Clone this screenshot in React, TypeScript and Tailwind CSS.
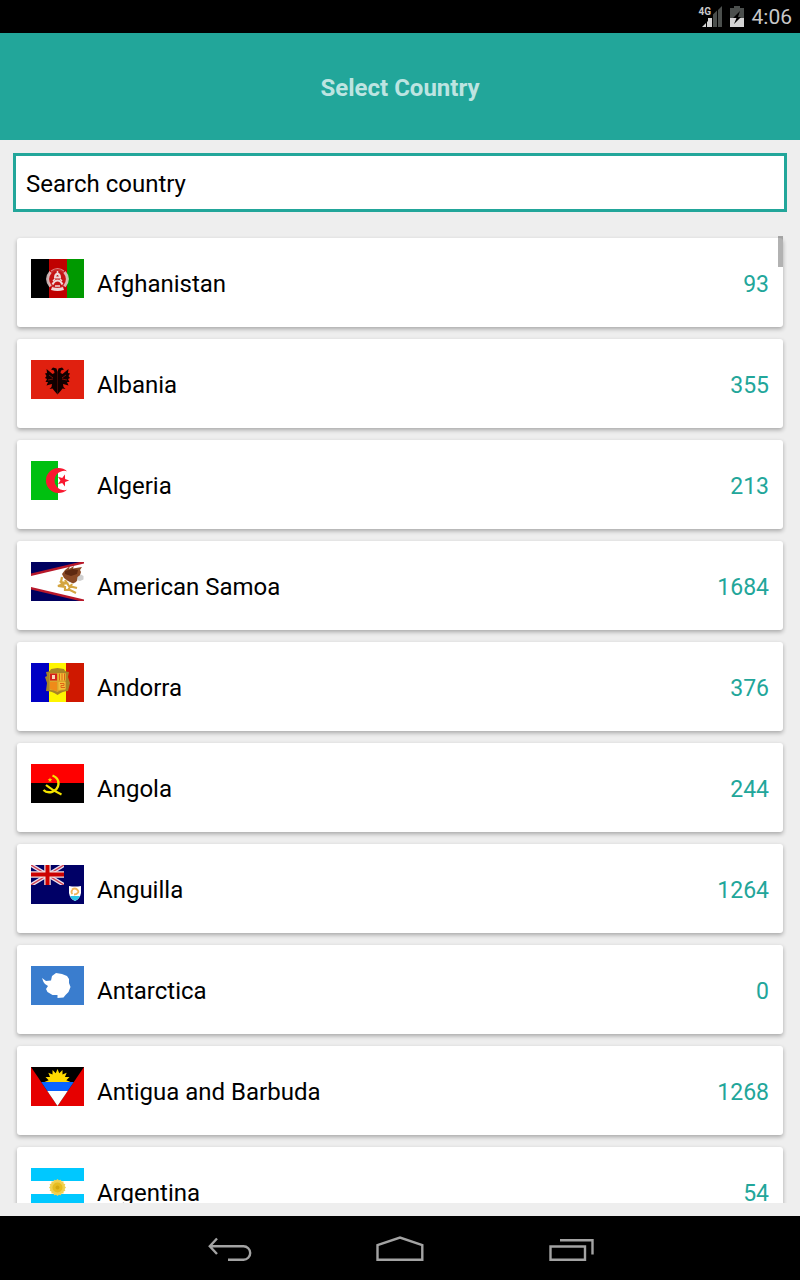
import type { ReactNode } from "react";

const starPoints = (cx: number, cy: number, outer: number, inner: number, tips: number, turn: number) =>
  Array.from({ length: tips * 2 }, (_, i) => {
    const r = i % 2 === 0 ? outer : inner;
    const a = turn + (i * Math.PI) / tips;
    return `${(cx + r * Math.cos(a)).toFixed(2)},${(cy + r * Math.sin(a)).toFixed(2)}`;
  }).join(" ");

const eagleWing =
  "M26.500 12L25.500 8.500L22 7.500L20 9.500L23 10.500L23.500 13L21.500 14L15.500 9L16 13L14 13.500L15.500 16L14 18L16 19L14.500 22L17 22L15.500 25.500L19 24.500L21 24L20.500 27L18.500 29L21.500 28.500L23 30.500L26.500 34.500z";

const flags: Record<string, ReactNode> = {
  Afghanistan: (
    <>
      <path fill="#000" d="M0 0h18v39H0z" />
      <path fill="#bf0000" d="M18 0h18v39H18z" />
      <path fill="#009900" d="M36 0h17v39H36z" />
      <circle cx="26.500" cy="20" r="10" fill="#d05050" opacity=".55" />
      <circle cx="26.500" cy="20" r="8" fill="#c41414" />
      <g fill="none" stroke="#eedada">
        <path strokeWidth="2.800" d="M19.500 13q-6 7 0 14.500M33.500 13q6 7 0 14.500" opacity=".8" />
        <path strokeWidth="1.200" d="M20 12q6.500-5 13 0" opacity=".6" />
        <path strokeWidth="2" d="M24 18.500q0-3 2.500-4q2.500 1 2.500 4zM21.500 25.500q2-4 5-4t5 4" />
        <path strokeWidth="1.500" d="M22 22l2-2M31 22l-2-2M26.500 14v-2M24 27h5" />
        <path strokeWidth="3" d="M20.500 29.500q6 2 12 0" />
      </g>
    </>
  ),
  Albania: (
    <>
      <path fill="#e0200f" d="M0 0h53v39H0z" />
      <path fill="#110000" d={eagleWing} />
      <path fill="#110000" d={eagleWing} transform="matrix(-1 0 0 1 53 0)" />
      <path stroke="#e0200f" strokeWidth=".500" d="M18 15l4 3M17 20l5-1M35 15l-4 3M36 20l-5-1" />
    </>
  ),
  Algeria: (
    <>
      <path fill="#fff" d="M0 0h53v39H0z" />
      <path fill="#00c010" d="M0 0h27v39H0z" />
      <path fill="#f9182f" d="M36 10.200a12.600 12.600 0 1 0 0 18.600a9.700 9.700 0 1 1 0-18.600z" />
      <polygon fill="#f9182f" points={starPoints(32, 19.5, 6.2, 2.6, 5, 0)} />
    </>
  ),
  "American Samoa": (
    <>
      <path fill="#00005f" d="M0 0h53v39H0z" />
      <path fill="#b8182a" d="M53 -1L0 11.500v16L53 40z" />
      <path fill="#fff" d="M53 1.500L0 14v11L53 37.500z" />
      <path
        fill="#8a4a26"
        d="M31 12L34 8L39 4L38 7L43 4L42 6.500L51 5L49 8L50 10L48.500 15L45 20L42 21.500L37 19L33 16z"
      />
      <path fill="#5e2911" d="M34 9L42 7L47 8L46 12L40 14L34 12z" />
      <path fill="#cfcfcf" d="M46.500 15L50 12.500L52.500 14V17.500L49 19L46 18z" />
      <path
        fill="none"
        stroke="#d4a540"
        strokeWidth="2.200"
        d="M31 15L30 20L35 21L27 24L34 25L34 28L39 28L45 31M34 18L38 24L46 26M37 28L41 22M29 19L33 24"
      />
    </>
  ),
  Andorra: (
    <>
      <path fill="#0000c4" d="M0 0h18v39H0z" />
      <path fill="#fff500" d="M18 0h17v39H18z" />
      <path fill="#cf1800" d="M35 0h18v39H35z" />
      <path fill="#a88525" d="M15 9q4 0 5-3l6.500-1 6.500 1q1 3 5 3l-1 5 2 6-2 8q-5 0-10.500 4q-5.500-4-11.500-4l1-8-2-6 2-1z" />
      <path fill="#dba62c" d="M18.500 10h16v17q-6 0-8 2q-3-2-8-2z" />
      <path fill="#d3201c" d="M19 10.500h7v7h-7z" />
      <path fill="#f8d7b4" d="M21 12h3v4h-3z" />
      <path fill="#ef8b19" d="M19 19h7v9l-7-2z" />
      <path fill="#f4bf38" d="M27.500 10.500h7v7h-7zM27.500 19h7v7l-7 1z" />
      <path fill="none" stroke="#e06518" d="M28.500 10.500v7M31 10.500v7M33.500 10.500v7M29 20.500h4v2h-3v2h4" />
    </>
  ),
  Angola: (
    <>
      <path fill="#000" d="M0 0h53v39H0z" />
      <path fill="#f00" d="M0 0h53v19H0z" />
      <path fill="none" stroke="#f4e400" strokeWidth="2.400" d="M21.500 11.500q6.500 2.500 6 8.500t-7 8q-5 1-8-2" />
      <path fill="none" stroke="#f4e400" strokeWidth="2.200" d="M15 21q6 5 15.500 9.500" />
      <polygon fill="#ffd000" points={starPoints(19, 16, 2.4, 1.1, 5, -1.57)} />
    </>
  ),
  Anguilla: (
    <>
      <path fill="#000066" d="M0 0h53v39H0z" />
      <svg width="33" height="20" viewBox="0 0 33 20">
        <path stroke="#e8e0ee" strokeWidth="4" d="M0 0l33 20M33 0L0 20" />
        <path stroke="#d04050" strokeWidth="1.400" d="M0 0l33 20M33 0L0 20" />
        <path stroke="#f4dede" strokeWidth="6.500" d="M16.500 0v20M0 9.500h33" />
        <path stroke="#c00" strokeWidth="4" d="M16.500 0v20M0 9.500h33" />
      </svg>
      <path fill="#fff" d="M38 21q6 1 12 0v7q-1 6-6 8q-5-2-6-8z" />
      <path fill="#2cc4e8" d="M39 31h10q-1 3-5 5q-4-2-5-5z" />
      <path fill="none" stroke="#f0b45a" strokeWidth="1.800" d="M41 24.500q3-2 5 0t1 3M41.500 29q-2-2 0-4M43 29.500q3 0 4-2" />
    </>
  ),
  Antarctica: (
    <>
      <path fill="#3a7dce" d="M0 0h53v39H0z" />
      <path
        fill="#fff"
        d="M11 12l4 3 5-.500 1-4.500 4-3 6 1 5 2 2 3 0 4 1.500 4-2 5-3 3-2 2.500-6 .500 0-3-5 0-5-3-1.500-3 2-3-3-2-1.500-2z"
      />
    </>
  ),
  "Antigua and Barbuda": (
    <>
      <path fill="#e60000" d="M0 0h53v39H0z" />
      <path fill="#000" d="M0 0h53L26.500 39z" />
      <polygon fill="#ffd900" points={starPoints(26.5, 15, 13, 9, 16, 0)} />
      <path fill="#0a64ff" d="M10.200 15h32.600l-6.100 9H16.300z" />
      <path fill="#fff" d="M16.300 24h20.400L26.500 39z" />
    </>
  ),
  Argentina: (
    <>
      <path fill="#00c8ff" d="M0 0h53v39H0z" />
      <path fill="#fff" d="M0 13h53v13H0z" />
      <polygon fill="#f0d050" points={starPoints(26.5, 19.5, 8.5, 7.3, 16, 0)} />
      <circle cx="26.500" cy="19.500" r="5" fill="#e6bd20" />
      <circle cx="26.500" cy="19.500" r="2" fill="#d4a810" />
    </>
  ),
};

const countries = [
  { name: "Afghanistan", code: 93 },
  { name: "Albania", code: 355 },
  { name: "Algeria", code: 213 },
  { name: "American Samoa", code: 1684 },
  { name: "Andorra", code: 376 },
  { name: "Angola", code: 244 },
  { name: "Anguilla", code: 1264 },
  { name: "Antarctica", code: 0 },
  { name: "Antigua and Barbuda", code: 1268 },
  { name: "Argentina", code: 54 },
];

function StatusBar() {
  return (
    <div className="flex h-[33px] shrink-0 items-center justify-end bg-black pr-2 text-[#c8c8c8]">
      <div className="relative mr-[7px] h-[22px] w-6">
        <svg className="h-full w-[23px]" viewBox="0 0 23 22" aria-hidden="true">
          <path fill="#4b4f4d" d="M14 8.500l4-4V21h-4zM19 4l4-4v21h-4z" />
          <path fill="#d4d4d4" d="M3 21l4-4v4zM8 16l1-1V12h4v9H8z" />
        </svg>
        <span className="absolute top-0 left-0 text-[10px] leading-[12px] font-bold">4G</span>
      </div>
      <svg className="mr-2 h-[22px] w-[14px]" viewBox="0 0 14 22" aria-hidden="true">
        <path fill="#4b4f4d" d="M4 0h6v2h4v10H0V2h4z" />
        <path fill="#d4d4d4" d="M0 12h14v9H0z" />
        <path fill="#000" d="M10 5l-7 7h3.500l-2.500 6 7-7H8z" />
      </svg>
      <span className="pt-[2px] text-[21px] leading-[31px]">4:06</span>
    </div>
  );
}

function CountryCard({ name, code }: { name: string; code: number }) {
  return (
    <li>
      <button
        type="button"
        className="flex w-full items-start gap-[13px] rounded-[3px] bg-white px-[14px] pt-[21px] pb-[17px] text-left shadow-[0_2px_4px_rgba(0,0,0,0.3)]"
      >
        <svg className="h-[39px] w-[53px] shrink-0" viewBox="0 0 53 39" aria-hidden="true">
          {flags[name]}
        </svg>
        <span className="flex h-[51px] flex-1 items-baseline justify-between leading-[50px]">
          <span>{name}</span>
          <span className="text-[23px] text-[#22a69a]">{code}</span>
        </span>
      </button>
    </li>
  );
}

function NavigationBar() {
  const button = "flex h-full w-[170px] items-center justify-center";
  const icon = "h-8 w-12 fill-none stroke-[#a3a3a3] stroke-[2.4px]";
  return (
    <nav className="flex h-16 shrink-0 justify-center bg-black">
      <button type="button" aria-label="Back" className={button}>
        <svg className={icon} viewBox="0 0 48 32">
          <path d="M11 6.500L3.800 14.300L11 22M4 14.300H37.500a6.700 6.700 0 0 1 0 13.400H22" />
        </svg>
      </button>
      <button type="button" aria-label="Home" className={button}>
        <svg className={icon} viewBox="0 0 48 32">
          <path d="M1.500 27.800V13.200L24 5.600L46.300 13.200V27.800z" />
        </svg>
      </button>
      <button type="button" aria-label="Recent apps" className={button}>
        <svg className={icon} viewBox="0 0 48 32">
          <path d="M4.500 14.500h34.500V27.800h-34.500zM14 8.200H46.500V22.500" />
        </svg>
      </button>
    </nav>
  );
}

export default function App() {
  return (
    <div className="flex h-screen flex-col bg-[#eee] font-['Roboto',sans-serif] text-[24px] text-black">
      <StatusBar />
      <header className="flex h-[107px] shrink-0 items-center justify-center bg-[#22a69a] pt-[2px]">
        <h1 className="text-[24px] leading-[32px] font-bold text-[#bde4e1]">Select Country</h1>
      </header>
      <main className="flex min-h-0 flex-1 flex-col p-[13px]">
        <input
          type="text"
          aria-label="Search country"
          placeholder="Search country"
          className="h-[59px] w-full shrink-0 border-[3px] border-[#22a69a] bg-white px-[10px] pt-[2px] outline-none placeholder:text-black placeholder:opacity-100"
        />
        <div className="relative mt-6 min-h-0 flex-1 overflow-hidden">
          <ul className="flex flex-col gap-3 px-1 pt-[2px]">
            {countries.map((country) => (
              <CountryCard key={country.name} {...country} />
            ))}
          </ul>
          <div className="absolute top-0 right-1 h-[31px] w-[5px] bg-black/30" />
        </div>
      </main>
      <NavigationBar />
    </div>
  );
}
